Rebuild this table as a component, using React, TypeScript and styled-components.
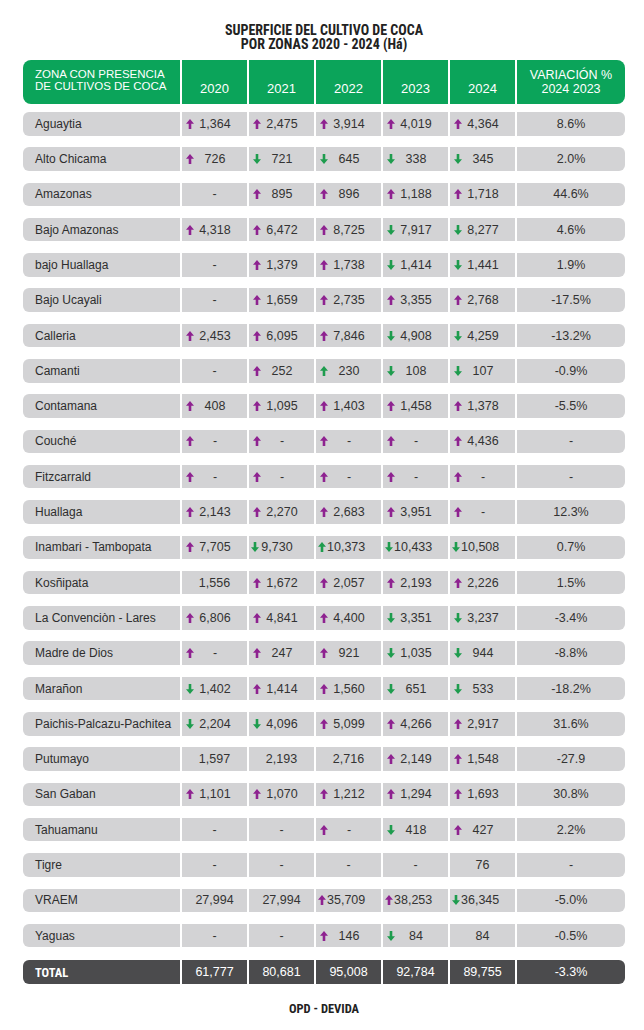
import React from "react";
import styled, { createGlobalStyle } from "styled-components";

const Global = createGlobalStyle`
  html, body { margin: 0; padding: 0; background: #ffffff; }
  body { font-family: "Liberation Sans", Arial, sans-serif; color: #333333; }
`;

const COLS = "157px repeat(5, 65px) 108px";
const CONDENSED = `"Roboto", "Open Sans", sans-serif`;

type Dir = "u" | "d" | "g" | "n";
type CellData = [Dir, string, boolean?];

const rows: { name: string; vals: CellData[]; varia: string }[] = [
  { name: "Aguaytia", vals: [["u", "1,364"], ["u", "2,475"], ["u", "3,914"], ["u", "4,019"], ["u", "4,364"]], varia: "8.6%" },
  { name: "Alto Chicama", vals: [["u", "726"], ["d", "721"], ["d", "645"], ["d", "338"], ["d", "345"]], varia: "2.0%" },
  { name: "Amazonas", vals: [["n", "-"], ["u", "895"], ["u", "896"], ["u", "1,188"], ["u", "1,718"]], varia: "44.6%" },
  { name: "Bajo Amazonas", vals: [["u", "4,318"], ["u", "6,472"], ["u", "8,725"], ["d", "7,917"], ["d", "8,277"]], varia: "4.6%" },
  { name: "bajo Huallaga", vals: [["n", "-"], ["u", "1,379"], ["u", "1,738"], ["d", "1,414"], ["d", "1,441"]], varia: "1.9%" },
  { name: "Bajo Ucayali", vals: [["n", "-"], ["u", "1,659"], ["u", "2,735"], ["u", "3,355"], ["u", "2,768"]], varia: "-17.5%" },
  { name: "Calleria", vals: [["u", "2,453"], ["u", "6,095"], ["u", "7,846"], ["d", "4,908"], ["d", "4,259"]], varia: "-13.2%" },
  { name: "Camanti", vals: [["n", "-"], ["u", "252"], ["g", "230"], ["d", "108"], ["d", "107"]], varia: "-0.9%" },
  { name: "Contamana", vals: [["u", "408"], ["u", "1,095"], ["u", "1,403"], ["u", "1,458"], ["u", "1,378"]], varia: "-5.5%" },
  { name: "Couché", vals: [["u", "-"], ["u", "-"], ["u", "-"], ["u", "-"], ["u", "4,436"]], varia: "-" },
  { name: "Fitzcarrald", vals: [["u", "-"], ["u", "-"], ["u", "-"], ["u", "-"], ["u", "-"]], varia: "-" },
  { name: "Huallaga", vals: [["u", "2,143"], ["u", "2,270"], ["u", "2,683"], ["u", "3,951"], ["u", "-"]], varia: "12.3%" },
  { name: "Inambari - Tambopata", vals: [["u", "7,705"], ["d", "9,730", true], ["g", "10,373", true], ["d", "10,433", true], ["d", "10,508", true]], varia: "0.7%" },
  { name: "Kosñipata", vals: [["n", "1,556"], ["u", "1,672"], ["u", "2,057"], ["u", "2,193"], ["u", "2,226"]], varia: "1.5%" },
  { name: "La Convenciòn - Lares", vals: [["u", "6,806"], ["u", "4,841"], ["u", "4,400"], ["d", "3,351"], ["d", "3,237"]], varia: "-3.4%" },
  { name: "Madre de Dios", vals: [["u", "-"], ["u", "247"], ["u", "921"], ["d", "1,035"], ["d", "944"]], varia: "-8.8%" },
  { name: "Marañon", vals: [["d", "1,402"], ["u", "1,414"], ["u", "1,560"], ["d", "651"], ["d", "533"]], varia: "-18.2%" },
  { name: "Paichis-Palcazu-Pachitea", vals: [["d", "2,204"], ["d", "4,096"], ["u", "5,099"], ["u", "4,266"], ["u", "2,917"]], varia: "31.6%" },
  { name: "Putumayo", vals: [["n", "1,597"], ["n", "2,193"], ["n", "2,716"], ["u", "2,149"], ["u", "1,548"]], varia: "-27.9" },
  { name: "San Gaban", vals: [["u", "1,101"], ["u", "1,070"], ["u", "1,212"], ["u", "1,294"], ["u", "1,693"]], varia: "30.8%" },
  { name: "Tahuamanu", vals: [["n", "-"], ["n", "-"], ["u", "-"], ["d", "418"], ["u", "427"]], varia: "2.2%" },
  { name: "Tigre", vals: [["n", "-"], ["n", "-"], ["n", "-"], ["n", "-"], ["n", "76"]], varia: "-" },
  { name: "VRAEM", vals: [["n", "27,994"], ["n", "27,994"], ["u", "35,709", true], ["u", "38,253", true], ["d", "36,345", true]], varia: "-5.0%" },
  { name: "Yaguas", vals: [["n", "-"], ["n", "-"], ["u", "146"], ["d", "84"], ["n", "84"]], varia: "-0.5%" },
];

const totals = ["61,777", "80,681", "95,008", "92,784", "89,755"];

const Page = styled.main`
  width: 602px;
  margin: 0 0 0 23px;
  padding-top: 23px;
  display: flex;
  flex-direction: column;
`;

const Title = styled.h1`
  margin: 0;
  text-align: center;
  font-family: ${CONDENSED};
  font-stretch: 82%;
  font-weight: 700;
  font-size: 14px;
  line-height: 14px;
  color: #222222;
`;

const Table = styled.section`
  margin-top: 9px;
  display: flex;
  flex-direction: column;
`;

const HeadRow = styled.div`
  display: grid;
  grid-template-columns: ${COLS};
  column-gap: 2px;
  height: 44px;
`;

const HeadCell = styled.div<{ $first?: boolean; $last?: boolean; $bottom?: boolean; $left?: boolean }>`
  background: #0ba45a;
  color: #ffffff;
  display: flex;
  flex-direction: column;
  justify-content: ${(p) => (p.$bottom ? "flex-end" : "center")};
  align-items: ${(p) => (p.$left ? "flex-start" : "center")};
  text-align: ${(p) => (p.$left ? "left" : "center")};
  padding: ${(p) => (p.$bottom ? "0 0 8px" : p.$left ? "0 0 4px 12px" : "0")};
  font-size: ${(p) => (p.$bottom ? "13px" : "12.5px")};
  line-height: 14px;
  border-radius: ${(p) => (p.$first ? "8px 0 0 8px" : p.$last ? "0 8px 8px 0" : "0")};
`;

const ZoneLabel = styled.span`
  font-size: 11.5px;
  line-height: 12px;
`;

const Body = styled.div`
  margin-top: 8px;
  display: flex;
  flex-direction: column;
  gap: 11.8px;
`;

const Row = styled.div`
  display: grid;
  grid-template-columns: ${COLS};
  column-gap: 2px;
  height: 23.5px;
`;

const Cell = styled.div<{ $first?: boolean; $last?: boolean; $dark?: boolean }>`
  background: ${(p) => (p.$dark ? "#4b4b4d" : "#d3d3d5")};
  color: ${(p) => (p.$dark ? "#ffffff" : "#333333")};
  font-size: 12.5px;
  display: flex;
  align-items: center;
  border-radius: ${(p) => (p.$first ? "6px 0 0 6px" : p.$last ? "0 6px 6px 0" : "0")};
`;

const NameCell = styled(Cell)`
  padding-left: 12px;
  font-size: 12px;
  color: ${(p) => (p.$dark ? "#ffffff" : "#2e2e2e")};
`;

const TotalLabel = styled.span`
  font-family: ${CONDENSED};
  font-stretch: 78%;
  font-weight: 700;
  font-size: 12.5px;
`;

const ValueCell = styled(Cell)<{ $arrow?: boolean; $tight?: boolean }>`
  justify-content: ${(p) => (p.$arrow ? "flex-start" : "center")};
  padding-left: ${(p) => (p.$arrow ? (p.$tight ? "2px" : "4px") : "0")};
  gap: ${(p) => (p.$tight ? "1px" : "4px")};
`;

const Num = styled.span<{ $boxed?: boolean }>`
  min-width: ${(p) => (p.$boxed ? "34px" : "0")};
  text-align: center;
`;

const VarCell = styled(Cell)`
  justify-content: center;
`;

const TotalRow = styled(Row)`
  margin-top: 13px;
`;

const Footer = styled.footer`
  margin-top: 18px;
  text-align: center;
  font-family: ${CONDENSED};
  font-stretch: 78%;
  font-weight: 700;
  font-size: 12.5px;
  line-height: 14px;
  color: #222222;
`;

const ArrowSvg = styled.svg`
  flex: none;
  display: block;
`;

function Arrow({ dir }: { dir: Dir }) {
  const color = dir === "u" ? "#8e2290" : "#1e9c4e";
  const up = dir !== "d";
  return (
    <ArrowSvg width="8" height="10" viewBox="0 0 8 10">
      <g transform={up ? undefined : "rotate(180 4 5)"}>
        <polygon points="4,0 8,4.8 5.3,4.8 5.3,10 2.7,10 2.7,4.8 0,4.8" fill={color} />
      </g>
    </ArrowSvg>
  );
}

export default function App() {
  return (
    <>
      <Global />
      <Page>
        <Title>
          SUPERFICIE DEL CULTIVO DE COCA
          <br />
          POR ZONAS 2020 - 2024 (Há)
        </Title>
        <Table>
          <HeadRow>
            <HeadCell $first $left>
              <ZoneLabel>ZONA CON PRESENCIA</ZoneLabel>
              <ZoneLabel>DE CULTIVOS DE COCA</ZoneLabel>
            </HeadCell>
            {["2020", "2021", "2022", "2023", "2024"].map((y) => (
              <HeadCell key={y} $bottom>
                {y}
              </HeadCell>
            ))}
            <HeadCell $last>
              <span>VARIACIÓN %</span>
              <span>2024 2023</span>
            </HeadCell>
          </HeadRow>
          <Body>
            {rows.map((r) => (
              <Row key={r.name}>
                <NameCell $first>{r.name}</NameCell>
                {r.vals.map(([d, v, tight], i) => {
                  const arrow = d !== "n";
                  return (
                    <ValueCell key={i} $arrow={arrow} $tight={arrow && !!tight}>
                      {arrow && <Arrow dir={d} />}
                      <Num $boxed={arrow}>{v}</Num>
                    </ValueCell>
                  );
                })}
                <VarCell $last>{r.varia}</VarCell>
              </Row>
            ))}
          </Body>
          <TotalRow>
            <NameCell $first $dark>
              <TotalLabel>TOTAL</TotalLabel>
            </NameCell>
            {totals.map((t) => (
              <ValueCell key={t} $dark>
                <Num>{t}</Num>
              </ValueCell>
            ))}
            <VarCell $last $dark>
              -3.3%
            </VarCell>
          </TotalRow>
        </Table>
        <Footer>OPD - DEVIDA</Footer>
      </Page>
    </>
  );
}
